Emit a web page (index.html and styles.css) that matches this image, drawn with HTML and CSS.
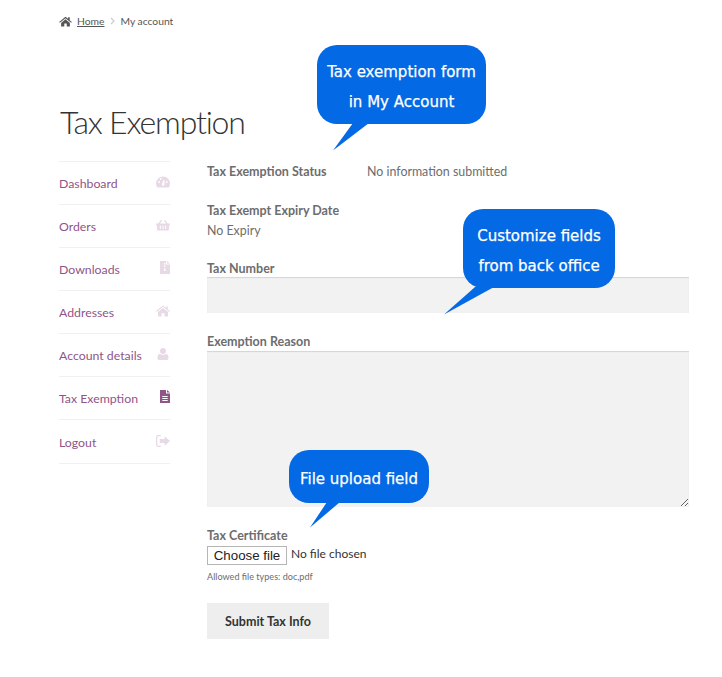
FILE: index.html
```html
<!DOCTYPE html>
<html lang="en">
<head>
<meta charset="utf-8">
<title>Tax Exemption</title>
<link rel="stylesheet" href="styles.css">
</head>
<body>
<div class="page">
  <nav class="crumbs">
    <svg class="crumb-home" viewBox="0 0 16 13"><path d="M8 .6 .2 7l.9 1L8 2.4 14.9 8l.9-1-2.6-2.1V1.2h-2v2L8 .6Zm0 3.2L2.6 8.2v4.4h3.9V9h3v3.6h3.9V8.2L8 3.8Z"/></svg>
    <a href="#" class="crumb-link">Home</a>
    <svg class="crumb-sep" viewBox="0 0 5 8"><path d="M1 1l3 3-3 3" fill="none" stroke="currentColor" stroke-width="1.2"/></svg>
    <span>My account</span>
  </nav>
  <h1 class="title">Tax Exemption</h1>
  <div class="columns">
    <ul class="menu">
      <li class="menu-item"><a href="#">Dashboard</a>
        <svg class="menu-icon" viewBox="0 0 14 11"><path d="M7 0a7 7 0 0 0-7 7c0 1.500.5 2.900 1.300 4h11.400A7 7 0 0 0 14 7a7 7 0 0 0-7-7ZM7.900 8.900a1.300 1.300 0 0 1-2-1.300L7.700 3.200l.9.200-.2 4.500c0 .4-.2.800-.5 1ZM2.200 5.500a.9.900 0 1 1 1.800 0 .9.900 0 0 1-1.800 0Zm1.700-3a.9.900 0 1 1 1.800 0 .9.900 0 0 1-1.800 0Zm6 3a.9.900 0 1 1 1.800 0 .9.900 0 0 1-1.800 0Z" fill-rule="evenodd"/></svg></li>
      <li class="menu-item"><a href="#">Orders</a>
        <svg class="menu-icon" viewBox="0 0 14 11"><path d="M0 4h2.300L5 .2l1 .7L3.800 4h6.400L8 .9l1-.7L11.700 4H14v1.300h-.6l-.8 5.700H1.400L.6 5.300H0V4Zm3.800 2v3.500h1V6h-1Zm2.700 0v3.500h1V6h-1Zm2.700 0v3.500h1V6h-1Z" fill-rule="evenodd"/></svg></li>
      <li class="menu-item"><a href="#">Downloads</a>
        <svg class="menu-icon menu-icon-file" viewBox="0 0 10 13"><path d="M0 0h6v3.500h4V13H0V0Zm7 0 3 2.600H7V0ZM4 2h1.400v1.400H4V2Zm0 2.600h1.400V6H4V4.600Zm0 2.600h1.400V10H4V7.200Z" fill-rule="evenodd"/></svg></li>
      <li class="menu-item"><a href="#">Addresses</a>
        <svg class="menu-icon" viewBox="0 0 14 11"><path d="M7 0 0 5.600l.7.800L7 1.300l6.300 5.100.7-.8-2.300-1.900V1h-1.700v1.400L7 0Zm0 2.500L2 6.500V11h3.500V7.800h3V11H12V6.500L7 2.500Z"/></svg></li>
      <li class="menu-item"><a href="#">Account details</a>
        <svg class="menu-icon" viewBox="0 0 12 13"><circle cx="6" cy="3.300" r="3.200"/><path d="M2.500 6.500C3.500 7.500 8.500 7.500 9.500 6.500 11 6.800 12 8 12 10.500c0 1.500-1 2.500-2.300 2.500H2.300C1 13 0 12 0 10.500 0 8 1 6.800 2.500 6.500Z"/></svg></li>
      <li class="menu-item menu-item-active"><a href="#">Tax Exemption</a>
        <svg class="menu-icon menu-icon-file" viewBox="0 0 10 13"><path d="M0 0h6v3.500h4V13H0V0Zm7 0 3 2.600H7V0ZM2.300 6v1h5.400V6H2.300Zm0 2v1h5.400V8H2.300Zm0 2v1h5.400v-1H2.300Z" fill-rule="evenodd"/></svg></li>
      <li class="menu-item menu-item-last"><a href="#">Logout</a>
        <svg class="menu-icon" viewBox="0 0 13 11"><path d="M4.500 0H2a2 2 0 0 0-2 2v7a2 2 0 0 0 2 2h2.500V9.800H2a.8.800 0 0 1-.8-.8V2c0-.4.4-.8.800-.8h2.500V0ZM8 1l5 4.500L8 10V7.300H3.500V3.700H8V1Z"/></svg></li>
    </ul>
    <form class="form">
      <div class="status-row"><span class="label status-label">Tax Exemption Status</span><span>No information submitted</span></div>
      <div class="expiry"><div class="label">Tax Exempt Expiry Date</div><div class="expiry-value">No Expiry</div></div>
      <label class="label field-label tax-number-label" for="tn">Tax Number</label>
      <input class="field" id="tn" type="text">
      <label class="label field-label reason-label" for="er">Exemption Reason</label>
      <textarea class="field field-area" id="er"></textarea>
      <div class="label cert-label">Tax Certificate</div>
      <div class="file-row"><button type="button" class="file-button">Choose file</button><span class="file-name">No file chosen</span></div>
      <div class="hint">Allowed file types: doc,pdf</div>
      <button type="button" class="submit">Submit Tax Info</button>
    </form>
  </div>
  <div class="callout callout-form">Tax exemption form<br>in My Account
    <svg class="tail tail-form" viewBox="0 0 36 28"><path d="M20 0 0 27.500 36 0Z"/></svg></div>
  <div class="callout callout-fields">Customize fields<br>from back office
    <svg class="tail tail-fields" viewBox="0 0 50 28"><path d="M31 0 0 27.500 50 0Z"/></svg></div>
  <div class="callout callout-file">File upload field
    <svg class="tail tail-file" viewBox="0 0 30 26"><path d="M17 0 0 25.500 30 0Z"/></svg></div>
</div>
</body>
</html>
```
FILE: styles.css
```css
* { box-sizing: border-box; }
html, body { margin: 0; padding: 0; background: #fff; }
body { font-family: "Lato", "Liberation Sans", sans-serif; font-size: 12.400px; color: #6d6d6d; }
.page { position: relative; width: 722px; height: 677px; padding: 13px 33px 0 59px; overflow: hidden; }
.crumbs { display: flex; align-items: center; height: 16px; font-size: 10.300px; color: #555; }
.crumb-home { width: 13px; height: 11px; fill: #555; margin-right: 5px; }
.crumb-link { color: #555; text-decoration: underline; }
.crumb-sep { width: 5px; height: 8px; color: #ccc; margin: 0 5px 0 6px; }
.title { margin: 69px 0 0; font-size: 32px; line-height: 48px; height: 48px; font-weight: 300; color: #333; letter-spacing: -1.200px; padding-left: 1px; }
.columns { display: flex; gap: 37px; margin-top: 15px; }
.menu { list-style: none; margin: 0; padding: 0; width: 111px; flex: none; border-top: 1px solid #f0f0f0; }
.menu-item { display: flex; justify-content: space-between; align-items: center; height: 43px; border-bottom: 1px solid #f0f0f0; }
.menu-item-last { height: 44px; padding-top: 2px; }
.menu-item a { color: #8f5589; text-decoration: none; font-size: 12.300px; }
.menu-icon { width: 14px; height: 12px; fill: #e7d9e6; margin-top: -3px; }
.menu-icon-file { width: 10px; height: 13px; }
.menu-item-active .menu-icon { fill: #8f5589; }
.form { flex: 1; display: flex; flex-direction: column; align-items: flex-start; }
.label { font-weight: 700; color: #6d6d6d; font-size: 12.500px; }
.status-row { display: flex; height: 20px; align-items: center; margin-top: 0; }
.status-label { width: 160px; }
.expiry { margin-top: 20px; line-height: 20px; }
.field-label { line-height: 18px; display: block; }
.tax-number-label { margin-top: 19px; height: 17px; }
.field { display: block; width: 482px; height: 36px; border: 0; border-radius: 0; background: #f2f2f2; box-shadow: inset 0 1px 1px rgba(0,0,0,.125); padding: 8px; outline: 0; margin: 0; }
.reason-label { margin-top: 20px; height: 18px; }
.field-area { height: 156px; resize: vertical; }
.cert-label { margin-top: 20px; line-height: 18px; }
.file-row { display: flex; align-items: flex-start; height: 22px; margin-top: 1px; }
.file-button { width: 80px; height: 19px; padding: 0; background: #fff; border: 1px solid #b5b5b5; border-radius: 0; font-family: "Liberation Sans", sans-serif; font-size: 13.300px; color: #222; }
.file-name { margin-left: 4px; color: #333; line-height: 16px; font-size: 12px; }
.hint { font-size: 9.100px; line-height: 14px; margin-top: 2px; color: #6d6d6d; }
.submit { margin-top: 19px; width: 122px; height: 36px; border: 0; background: #eee; font-family: inherit; font-weight: 700; font-size: 12.500px; color: #333; padding: 0; }
.callout { position: absolute; background: #0369e4; color: #fff; border-radius: 20px; text-align: center; font-family: "DejaVu Sans", sans-serif; font-size: 15px; line-height: 30px; -webkit-text-stroke: .25px #fff; }
.tail { position: absolute; fill: #0369e4; top: 100%; display: block; }
.callout-form { left: 317px; top: 45px; width: 169px; height: 79px; padding-top: 12px; }
.tail-form { left: 16px; width: 36px; height: 28px; margin-top: -1px; }
.callout-fields { left: 463px; top: 209px; width: 152px; height: 79px; padding-top: 12px; }
.tail-fields { left: -19px; width: 50px; height: 28px; margin-top: -1px; }
.callout-file { left: 289px; top: 450px; width: 140px; height: 53px; padding-top: 14px; }
.tail-file { left: 21px; width: 30px; height: 26px; margin-top: -1px; }
```
